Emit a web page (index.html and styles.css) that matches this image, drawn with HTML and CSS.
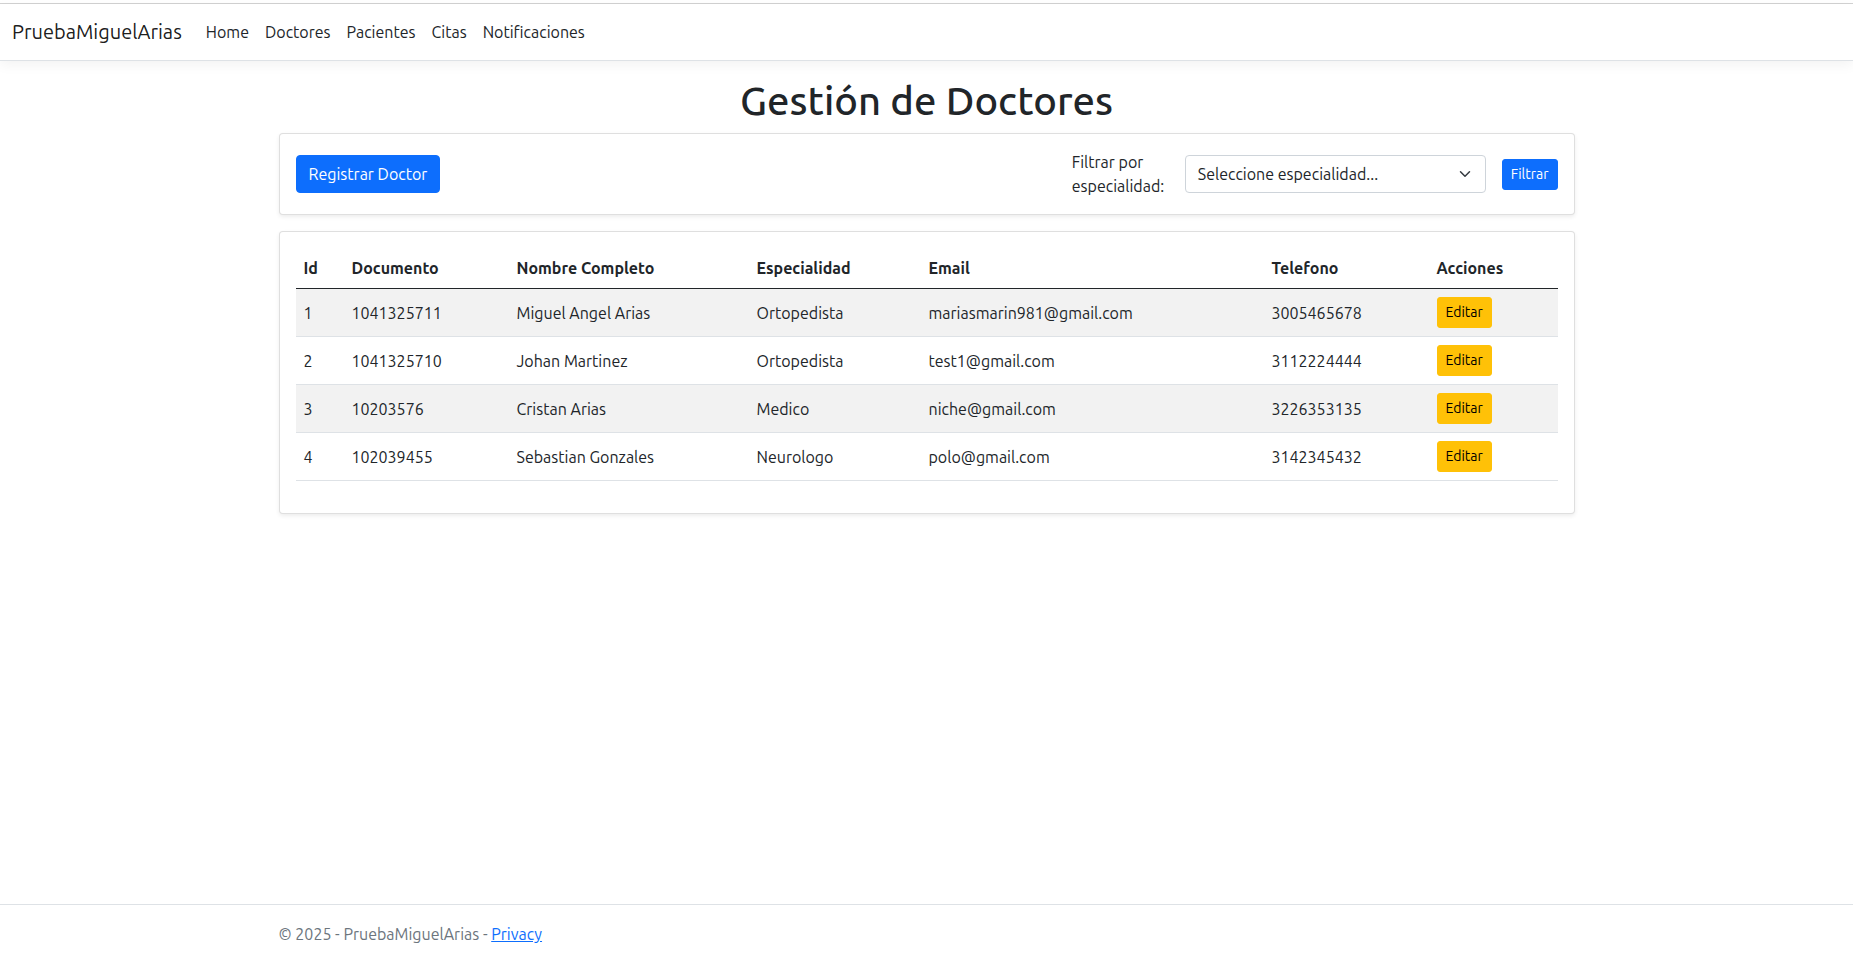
FILE: index.html
```html
<!DOCTYPE html>
<html lang="es">
<head>
<meta charset="utf-8">
<title>Doctores - PruebaMiguelArias</title>
<link rel="stylesheet" href="styles.css">
</head>
<body>
<header class="site-header">
  <nav class="navbar">
    <div class="nav-inner">
      <a class="brand" href="#">PruebaMiguelArias</a>
      <ul class="nav-links">
        <li><a href="#">Home</a></li>
        <li><a href="#">Doctores</a></li>
        <li><a href="#">Pacientes</a></li>
        <li><a href="#">Citas</a></li>
        <li><a href="#">Notificaciones</a></li>
      </ul>
    </div>
  </nav>
</header>

<main class="container main">
  <h1 class="page-title">Gestión de Doctores</h1>

  <div class="card">
    <div class="card-body toolbar">
      <button class="btn btn-primary" type="button">Registrar Doctor</button>
      <form class="filter">
        <label class="filter-label">Filtrar por especialidad:</label>
        <div class="select">
          <span>Seleccione especialidad...</span>
          <svg class="chevron" viewBox="0 0 16 16" width="16" height="12"><path d="m2 5 6 6 6-6" fill="none" stroke="#343a40" stroke-width="2" stroke-linecap="round" stroke-linejoin="round"/></svg>
        </div>
        <button class="btn btn-primary btn-sm" type="button">Filtrar</button>
      </form>
    </div>
  </div>

  <div class="card">
    <div class="card-body">
      <table class="table">
        <colgroup>
          <col class="c-id"><col class="c-doc"><col class="c-name"><col class="c-esp"><col class="c-mail"><col class="c-tel"><col class="c-act">
        </colgroup>
        <thead>
          <tr><th>Id</th><th>Documento</th><th>Nombre Completo</th><th>Especialidad</th><th>Email</th><th>Telefono</th><th>Acciones</th></tr>
        </thead>
        <tbody>
          <tr class="striped"><td>1</td><td>1041325711</td><td>Miguel Angel Arias</td><td>Ortopedista</td><td>mariasmarin981@gmail.com</td><td>3005465678</td><td><button class="btn btn-warning btn-sm" type="button">Editar</button></td></tr>
          <tr><td>2</td><td>1041325710</td><td>Johan Martinez</td><td>Ortopedista</td><td>test1@gmail.com</td><td>3112224444</td><td><button class="btn btn-warning btn-sm" type="button">Editar</button></td></tr>
          <tr class="striped"><td>3</td><td>10203576</td><td>Cristan Arias</td><td>Medico</td><td>niche@gmail.com</td><td>3226353135</td><td><button class="btn btn-warning btn-sm" type="button">Editar</button></td></tr>
          <tr><td>4</td><td>102039455</td><td>Sebastian Gonzales</td><td>Neurologo</td><td>polo@gmail.com</td><td>3142345432</td><td><button class="btn btn-warning btn-sm" type="button">Editar</button></td></tr>
        </tbody>
      </table>
    </div>
  </div>
</main>

<footer class="footer">
  <div class="container">© 2025 - PruebaMiguelArias - <a href="#">Privacy</a></div>
</footer>
</body>
</html>
```

FILE: styles.css
```css
* { box-sizing: border-box; }

html, body { margin: 0; }

body {
  font-family: Ubuntu, Lato, "Noto Sans", sans-serif;
  font-size: 16px;
  line-height: 1.5;
  color: #212529;
  background: #fff;
  min-height: 100vh;
  display: flex;
  flex-direction: column;
}

.site-header {
  margin-top: 3px;
  border-top: 1px solid #d2d2d2;
}

.navbar {
  background: #fff;
  border-bottom: 1px solid #dee2e6;
  box-shadow: 0 4px 12px rgba(0, 0, 0, .05);
  padding: 8px 0;
  margin-bottom: 16px;
}

.nav-inner {
  padding: 0 12px;
  display: flex;
  align-items: center;
}

.brand {
  font-size: 20px;
  line-height: 30px;
  padding: 5px 0;
  margin-right: 16px;
  color: rgba(0, 0, 0, .9);
  text-decoration: none;
}

.nav-links {
  display: flex;
  list-style: none;
  margin: 0;
  padding: 0;
}

.nav-links a {
  display: block;
  padding: 8px;
  color: #212529;
  text-decoration: none;
}

.container {
  width: 100%;
  max-width: 1320px;
  margin: 0 auto;
  padding: 0 12px;
}

.main { flex: 1; }

.page-title {
  font-size: 40px;
  font-weight: 500;
  line-height: 1.2;
  margin: 0 0 8px;
  text-align: center;
}

.card {
  background: #fff;
  border: 1px solid rgba(0, 0, 0, .125);
  border-radius: 4px;
  box-shadow: 0 2px 4px rgba(0, 0, 0, .075);
  margin-bottom: 16px;
}

.card-body { padding: 16px; }

.toolbar {
  display: flex;
  align-items: center;
  justify-content: space-between;
}

.btn {
  font-family: inherit;
  font-size: 16px;
  line-height: 24px;
  padding: 6px 12px;
  border: 1px solid transparent;
  border-radius: 4px;
  cursor: pointer;
}

.btn-primary {
  background: #0d6efd;
  border-color: #0d6efd;
  color: #fff;
}

.btn-warning {
  background: #ffc107;
  border-color: #ffc107;
  color: #000;
}

.btn-sm {
  font-size: 14px;
  line-height: 21px;
  padding: 4px 8px;
  border-radius: 3px;
}

.filter {
  display: flex;
  align-items: center;
  margin: 0;
}

.filter-label {
  width: 97px;
  margin-right: 16px;
}

.select {
  width: 301px;
  height: 38px;
  display: flex;
  align-items: center;
  justify-content: space-between;
  padding: 6px 12px;
  border: 1px solid #ced4da;
  border-radius: 4px;
  margin-right: 16px;
}

.chevron { display: block; }

.table {
  width: 100%;
  border-collapse: collapse;
  table-layout: fixed;
  margin-bottom: 16px;
}

.c-id { width: 48px; }
.c-doc { width: 165px; }
.c-name { width: 240px; }
.c-esp { width: 172px; }
.c-mail { width: 343px; }
.c-tel { width: 165px; }
.c-act { width: 129px; }

.table th,
.table td {
  padding: 8px;
  text-align: left;
  vertical-align: middle;
  border-bottom: 1px solid #dee2e6;
  white-space: nowrap;
}

.table th {
  font-weight: 700;
  border-bottom: 1px solid #212529;
}

.table tr.striped td { background: #f2f2f2; }

.footer {
  border-top: 1px solid #dee2e6;
  line-height: 58px;
  color: #6c757d;
  white-space: nowrap;
}

.footer a { color: #0d6efd; }
```
